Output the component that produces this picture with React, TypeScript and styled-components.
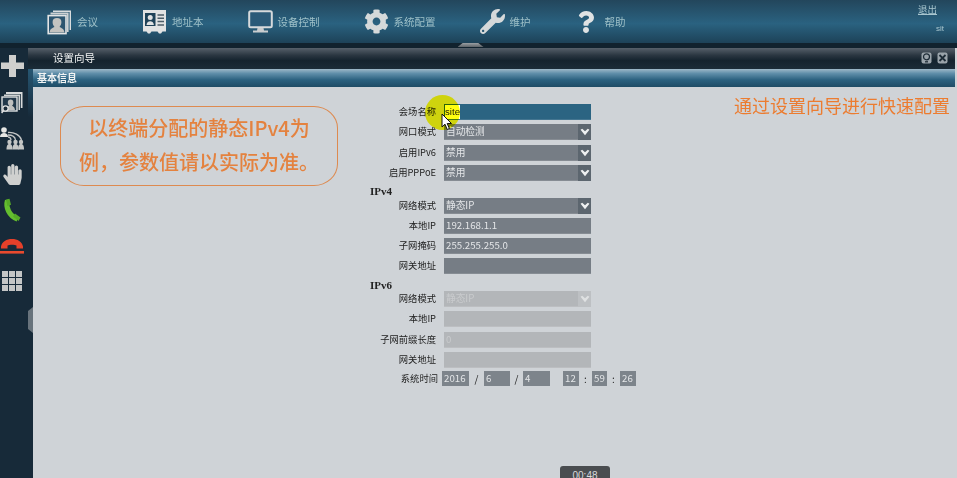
import styled, { createGlobalStyle } from "styled-components";
import { FaCog, FaHandPaper, FaQuestion, FaWrench } from "react-icons/fa";

const GlobalStyle = createGlobalStyle`
  html, body {
    margin: 0;
    padding: 0;
    background: #cfd3d7;
  }
  body {
    font-family: "Noto Sans CJK SC", "Liberation Sans", sans-serif;
    font-size: 10px;
  }
`;

const MeetingIcon = () => (
  <svg width="25" height="26" viewBox="0 0 25 26">
    <path d="M6 3V1.5H24V21H22.6V3Z" fill="#d9dcde" />
    <path d="M3.5 5.5V3.6H21.6V23H20V5.5Z" fill="#cdd1d3" />
    <rect x="1.2" y="6.6" width="17.8" height="18" fill="#2c5570" stroke="#e2e4e5" strokeWidth="1.6" />
    <path d="M2.5 23.6c.4-4 3-4.6 5-5.6-1.2-1.5-1.9-3-1.9-5 0-2.4 1.5-3.9 4.4-3.9s4.4 1.5 4.4 3.9c0 2-.7 3.5-1.9 5 2 1 4.6 1.6 5 5.6Z" fill="#c3c3c0" />
  </svg>
);

const AddressIcon = () => (
  <svg width="25" height="25" viewBox="0 0 25 25">
    <path d="M1 1H24V22.5H20.5L19 24.5H17L15.5 22.5H9.5L8 24.5H6L4.5 22.5H1Z" fill="#e1e3e3" />
    <rect x="3" y="4" width="10.5" height="13" fill="#1e4258" />
    <circle cx="8.2" cy="8.6" r="2.5" fill="#e1e3e3" />
    <path d="M4.5 16c.3-3 2-3.8 3.7-3.8s3.4.8 3.7 3.8Z" fill="#e1e3e3" />
    <path d="M15.5 6H22M15.5 9.3H22M15.5 12.6H22M15.5 15.9H22" stroke="#4c5e68" strokeWidth="1.5" />
  </svg>
);

const MonitorIcon = () => (
  <svg width="25" height="23" viewBox="0 0 25 23">
    <rect x="1.2" y="1.2" width="22.6" height="16" rx="1.5" fill="#2a5a78" stroke="#d6dadc" strokeWidth="2" />
    <path d="M9.5 18H15.5L16 20.5H20V22.5H5V20.5H9Z" fill="#c9cdcf" />
  </svg>
);

const PlusIcon = () => (
  <svg width="23" height="24" viewBox="0 0 23 24">
    <path d="M8 1H15V8.5H23V15H15V23H8V15H0V8.5H8Z" fill="#cfcfcd" />
  </svg>
);

const SearchCardsIcon = () => (
  <svg width="22" height="23" viewBox="0 0 22 23">
    <path d="M5 3V1H21.5V17H19.8V3Z" fill="#d8dadb" />
    <path d="M3 5V3.4H19V19H17.5V5Z" fill="#d0d3d4" />
    <rect x="1" y="6" width="15" height="14" fill="#22384a" stroke="#dfe1e2" strokeWidth="1.4" />
    <path d="M5 19c.2-3 2-3.4 3.2-4.2-1-1-1.4-2-1.4-3.3 0-1.8 1-2.9 2.8-2.9s2.8 1.100 2.8 2.900c0 1.300-.4 2.300-1.400 3.300 1.200.8 2.800 1.200 3 4.200Z" fill="#bfc0bf" />
    <circle cx="4.5" cy="17.5" r="2.6" fill="#1a2b39" stroke="#e4e5e5" strokeWidth="1.2" />
    <path d="M2.6 19.6L.6 22" stroke="#e4e5e5" strokeWidth="1.4" />
  </svg>
);

const OrgIcon = () => (
  <svg width="24" height="24" viewBox="0 0 24 24">
    <circle cx="4" cy="4" r="2.8" fill="#e6e6e4" />
    <path d="M0 11c0-3 2-4 4-4s4 1 4 4Z" fill="#e6e6e4" />
    <path d="M8 6.5C14 6 20 9 21.5 14M8 9C12 9 15 11 15.5 14M8 11c1.6 0 2.8 1.200 3 3" fill="none" stroke="#c4c6c6" strokeWidth="1.3" />
    {[9.5, 15.5, 21].map((x) => (
      <g key={x} fill="#c4c6c5">
        <circle cx={x} cy="16" r="2.2" />
        <path d={`M${x - 3} 23.5c0-4 1-5.500 3-5.500s3 1.500 3 5.500Z`} />
      </g>
    ))}
  </svg>
);

const PhoneIcon = () => (
  <svg width="18" height="24" viewBox="0 0 18 24">
    <path d="M4.5 2.5C2.5 9 6 18 14.5 21" fill="none" stroke="#64bf2f" strokeWidth="5.2" />
    <path d="M3 1.5L6.5 .8L8 6.800L4.400 8ZM10 18.500L12 15.500L17.500 19.500L15.500 23Z" fill="#56ab28" />
  </svg>
);

const HangupIcon = () => (
  <svg width="24" height="16" viewBox="0 0 24 16">
    <path d="M1 8.5C2 3.5 6.5 1 12 1s10 2.500 11 7.500V10.500H16.500V7.500C15 6.500 9 6.500 7.500 7.500V10.500H1Z" fill="#e5402a" />
    <rect x="0" y="13" width="24" height="2.6" fill="#e84a2e" />
  </svg>
);

const TitleHelp = () => (
  <svg width="11" height="12" viewBox="0 0 11 12">
    <rect x=".5" y=".5" width="10" height="11" rx="2" fill="#9aa3aa" />
    <circle cx="5.5" cy="4.8" r="3" fill="none" stroke="#1d2b36" strokeWidth="1.2" />
    <path d="M4 9.800H7" stroke="#1d2b36" strokeWidth="1.3" />
  </svg>
);

const TitleClose = () => (
  <svg width="11" height="12" viewBox="0 0 11 12">
    <rect x=".5" y=".5" width="10" height="11" rx="2" fill="#9aa3aa" />
    <path d="M2.5 3L8.5 9M8.5 3L2.5 9" stroke="#1d2b36" strokeWidth="1.8" />
  </svg>
);

const Cursor = () => (
  <svg width="12" height="18" viewBox="0 0 12 18">
    <path d="M1 1V14L4 11.200L6.200 16.500L8.400 15.500L6.200 10.500H10.500Z" fill="#fff" stroke="#111" strokeWidth="1" />
  </svg>
);

const navItems = [
  { label: "会议", icon: <MeetingIcon /> },
  { label: "地址本", icon: <AddressIcon /> },
  { label: "设备控制", icon: <MonitorIcon /> },
  { label: "系统配置", icon: <FaCog size={25} color="#d5d9da" /> },
  { label: "维护", icon: <FaWrench size={25} color="#d5d9da" /> },
  { label: "帮助", icon: <FaQuestion size={22} color="#dfe2e3" /> },
];

const Select = ({ value, disabled }: { value: string; disabled?: boolean }) => (
  <Field $disabled={disabled}>
    {value}
    <Arrow $disabled={disabled}>
      <svg width="10" height="8" viewBox="0 0 9 7">
        <path d="M.5 1.500L2 .5L4.500 2.800L7 .5L8.500 1.500L4.500 6.500Z" fill={disabled ? "#dfe1e2" : "#eef0f1"} />
      </svg>
    </Arrow>
  </Field>
);

const App = () => {
  return (
    <Page>
      <GlobalStyle />
      <TopBar>
        <Nav>
          {navItems.map((item) => (
            <NavItem key={item.label}>
              <NavIcon>{item.icon}</NavIcon>
              <span>{item.label}</span>
            </NavItem>
          ))}
        </Nav>
        <UserBox>
          <Logout>退出</Logout>
          <UserName>sit</UserName>
        </UserBox>
      </TopBar>
      <BarEdge>
        <Grip />
      </BarEdge>
      <Body>
        <Sidebar>
          <SideIcon>
            <PlusIcon />
          </SideIcon>
          <SideIcon>
            <SearchCardsIcon />
          </SideIcon>
          <SideIcon>
            <OrgIcon />
          </SideIcon>
          <SideIcon>
            <FaHandPaper size={21} color="#cfd0cf" />
          </SideIcon>
          <SideIcon>
            <PhoneIcon />
          </SideIcon>
          <SideIcon>
            <HangupIcon />
          </SideIcon>
          <SideIcon>
            <GridIcon>
              {Array.from({ length: 9 }).map((_, i) => (
                <GridCell key={i} />
              ))}
            </GridIcon>
          </SideIcon>
          <SideHandle />
        </Sidebar>
        <Main>
          <TitleBar>
            <div>设置向导</div>
            <TitleButtons>
              <TitleHelp />
              <TitleClose />
            </TitleButtons>
          </TitleBar>
          <SubBar>基本信息</SubBar>
          <Content>
            <Callout>
              以终端分配的静态IPv4为
              <br />
              例，参数值请以实际为准。
            </Callout>
            <Form>
              <Row>
                <Label>会场名称</Label>
                <Field $active>
                  <Selected>site</Selected>
                </Field>
              </Row>
              <Row>
                <Label>网口模式</Label>
                <Select value="自动检测" />
              </Row>
              <Row>
                <Label>启用IPv6</Label>
                <Select value="禁用" />
              </Row>
              <Row>
                <Label>启用PPPoE</Label>
                <Select value="禁用" />
              </Row>
              <Heading>IPv4</Heading>
              <Row>
                <Label>网络模式</Label>
                <Select value="静态IP" />
              </Row>
              <Row>
                <Label>本地IP</Label>
                <Field>192.168.1.1</Field>
              </Row>
              <Row>
                <Label>子网掩码</Label>
                <Field>255.255.255.0</Field>
              </Row>
              <Row>
                <Label>网关地址</Label>
                <Field />
              </Row>
              <Heading>IPv6</Heading>
              <Row>
                <Label>网络模式</Label>
                <Select value="静态IP" disabled />
              </Row>
              <Row>
                <Label>本地IP</Label>
                <Field $disabled />
              </Row>
              <Row>
                <Label>子网前缀长度</Label>
                <Field $disabled>0</Field>
              </Row>
              <Row>
                <Label>网关地址</Label>
                <Field $disabled />
              </Row>
              <TimeRow>
                <TimeLabel>系统时间</TimeLabel>
                <TimeField $width={27}>2016</TimeField>
                <TimeSep $width={15}>/</TimeSep>
                <TimeField $width={26}>6</TimeField>
                <TimeSep $width={13}>/</TimeSep>
                <TimeField $width={27}>4</TimeField>
                <TimeSep $width={13} />
                <TimeField $width={16}>12</TimeField>
                <TimeSep $width={13}>:</TimeSep>
                <TimeField $width={15}>59</TimeField>
                <TimeSep $width={13}>:</TimeSep>
                <TimeField $width={16}>26</TimeField>
              </TimeRow>
            </Form>
            <Note>通过设置向导进行快速配置</Note>
            <Highlight />
            <CursorSpot>
              <Cursor />
            </CursorSpot>
            <Clock>00:48</Clock>
          </Content>
        </Main>
      </Body>
    </Page>
  );
};

export default App;

const Page = styled.div`
  width: 957px;
  height: 478px;
  overflow: hidden;
  display: flex;
  flex-direction: column;
`;

const TopBar = styled.header`
  height: 43px;
  flex: none;
  display: flex;
  justify-content: space-between;
  background: linear-gradient(#23465c 0%, #2a6280 55%, #1d4258 100%);
`;

const Nav = styled.nav`
  display: flex;
  align-items: center;
  gap: 44px;
  padding-left: 47px;
`;

const NavItem = styled.div`
  display: flex;
  align-items: center;
  gap: 5px;
  font-size: 10.5px;
  color: #9fc1c8;
`;

const NavIcon = styled.div`
  width: 25px;
  height: 26px;
  display: flex;
  align-items: center;
  justify-content: flex-start;
`;

const UserBox = styled.div`
  width: 39px;
  color: #a9c6cf;
  font-size: 9.5px;
  line-height: 12px;
`;

const Logout = styled.div`
  margin-top: 3px;
  text-decoration: underline;
`;

const UserName = styled.div`
  margin: 8px 0 0 18px;
  font-family: "Liberation Sans", sans-serif;
  font-size: 8px;
`;

const BarEdge = styled.div`
  height: 5px;
  flex: none;
  background: #11222e;
  display: flex;
  justify-content: center;
  padding-right: 16px;
`;

const Grip = styled.div`
  width: 26px;
  height: 4px;
  background: linear-gradient(#9a9fa3, #5d6368);
  clip-path: polygon(20% 0, 80% 0, 100% 100%, 0 100%);
`;

const Body = styled.div`
  flex: 1;
  display: flex;
  min-height: 0;
`;

const Sidebar = styled.aside`
  width: 28px;
  flex: none;
  position: relative;
  background: #172a39;
  display: flex;
  flex-direction: column;
`;

const SideIcon = styled.div`
  height: 36px;
  display: flex;
  align-items: center;
  justify-content: center;
  margin-left: -4px;
`;

const GridIcon = styled.div`
  display: grid;
  grid-template-columns: repeat(3, 6px);
  grid-template-rows: repeat(3, 6px);
  gap: 1px;
  margin-top: -2px;
`;

const GridCell = styled.div`
  background: #c4c6c6;
`;

const SideHandle = styled.div`
  position: absolute;
  right: -5px;
  top: 259px;
  width: 5px;
  height: 26px;
  background: #68737c;
  clip-path: polygon(100% 0, 100% 100%, 0 85%, 0 15%);
`;

const Main = styled.main`
  flex: 1;
  display: flex;
  flex-direction: column;
  min-width: 0;
  margin-right: 2px;
  border-left: 5px solid;
  border-image: linear-gradient(#2f6a8a 0, #1d3d53 50px, #172a39 70px) 1;
`;

const TitleBar = styled.div`
  height: 21px;
  box-sizing: border-box;
  flex: none;
  margin-left: -5px;
  padding: 0 7px 2px 25px;
  display: flex;
  align-items: center;
  justify-content: space-between;
  background: linear-gradient(#56606a 0%, #2a3641 35%, #14232e 60%, #1b2c38 100%);
  color: #f1f3f3;
  font-size: 10.5px;
`;

const TitleButtons = styled.div`
  display: flex;
  gap: 5px;
`;

const SubBar = styled.div`
  height: 18px;
  box-sizing: border-box;
  flex: none;
  padding: 0 0 2px 4px;
  display: flex;
  align-items: center;
  background: linear-gradient(#9db8c8 0%, #5f8ea9 25%, #2c6280 60%, #1f4c66 100%);
  color: #f2f4f4;
  font-size: 10px;
  font-weight: 700;
`;

const Content = styled.section`
  flex: 1;
  position: relative;
  display: flex;
  align-items: flex-start;
  padding: 9px 5px 0 0;
  background: #cfd3d7;
  color: #222;
`;

const Callout = styled.div`
  width: 278px;
  height: 80px;
  box-sizing: border-box;
  margin: 10px 0 0 27px;
  flex: none;
  border: 1.5px solid #dd8a50;
  border-radius: 24px / 22px;
  text-align: center;
  font-size: 20px;
  font-weight: 500;
  line-height: 34px;
  padding-top: 4px;
  color: #e4823f;
  white-space: nowrap;
`;

const Form = styled.div`
  width: 270px;
  flex: none;
  margin: 8px 0 0 32px;
  display: flex;
  flex-direction: column;
`;

const Row = styled.div`
  height: 20.25px;
  display: flex;
  gap: 8px;
`;

const Label = styled.div`
  width: 66px;
  height: 16px;
  line-height: 14px;
  flex: none;
  text-align: right;
  white-space: nowrap;
  font-size: 9.3px;
  color: #222;
`;

const Field = styled.div<{ $active?: boolean; $disabled?: boolean }>`
  width: 147px;
  height: 16px;
  box-sizing: border-box;
  position: relative;
  padding-left: 2px;
  font-size: 9.7px;
  line-height: 15px;
  color: ${(p) => (p.$disabled ? "#c9cbcd" : "#e4e6e8")};
  background: ${(p) => (p.$active ? "#2b6482" : p.$disabled ? "#b3b6b9" : "#767d85")};
  box-shadow: inset 0 -1px 0 rgba(255, 255, 255, 0.12);
`;

const Selected = styled.span`
  display: inline-block;
  height: 14px;
  margin: 1px 0 0 -1px;
  line-height: 13px;
  background: #fff;
  color: #222;
  font-family: "Liberation Sans", sans-serif;
`;

const Arrow = styled.div<{ $disabled?: boolean }>`
  position: absolute;
  right: 0;
  top: 0;
  width: 13px;
  height: 16px;
  display: flex;
  align-items: center;
  justify-content: center;
  background: ${(p) => (p.$disabled ? "#bdc0c3" : "#5c666f")};
`;

const Heading = styled.div`
  height: 12.5px;
  font-family: "Liberation Serif", serif;
  font-weight: 700;
  font-size: 11px;
  line-height: 12px;
  color: #222;
`;

const TimeRow = styled.div`
  height: 16px;
  margin-top: -1px;
  display: flex;
`;

const TimeLabel = styled.div`
  width: 68px;
  margin-right: 4px;
  flex: none;
  text-align: right;
  line-height: 14px;
  font-size: 9.3px;
`;

const TimeField = styled.div<{ $width: number }>`
  width: ${(p) => p.$width}px;
  flex: none;
  height: 15px;
  padding-left: 2px;
  box-sizing: border-box;
  background: #7d848b;
  color: #e4e6e8;
  font-size: 9.7px;
  line-height: 15px;
`;

const TimeSep = styled.div<{ $width: number }>`
  width: ${(p) => p.$width}px;
  flex: none;
  text-align: center;
  font-size: 10px;
  line-height: 15px;
  color: #222;
`;

const Note = styled.div`
  margin-left: auto;
  font-size: 18px;
  line-height: 18px;
  white-space: nowrap;
  color: #ec7c30;
`;

const Highlight = styled.div`
  position: absolute;
  left: 392px;
  top: 8px;
  width: 35px;
  height: 35px;
  border-radius: 50%;
  background: #ffff10;
  mix-blend-mode: multiply;
`;

const CursorSpot = styled.div`
  position: absolute;
  left: 408px;
  top: 26px;
  height: 18px;
`;

const Clock = styled.div`
  position: absolute;
  left: 527px;
  top: 379px;
  width: 50px;
  height: 24px;
  border-radius: 3px;
  background: #4a4d50;
  color: #d8dadc;
  font-family: "Liberation Sans", sans-serif;
  font-size: 10px;
  line-height: 20px;
  text-align: center;
`;
